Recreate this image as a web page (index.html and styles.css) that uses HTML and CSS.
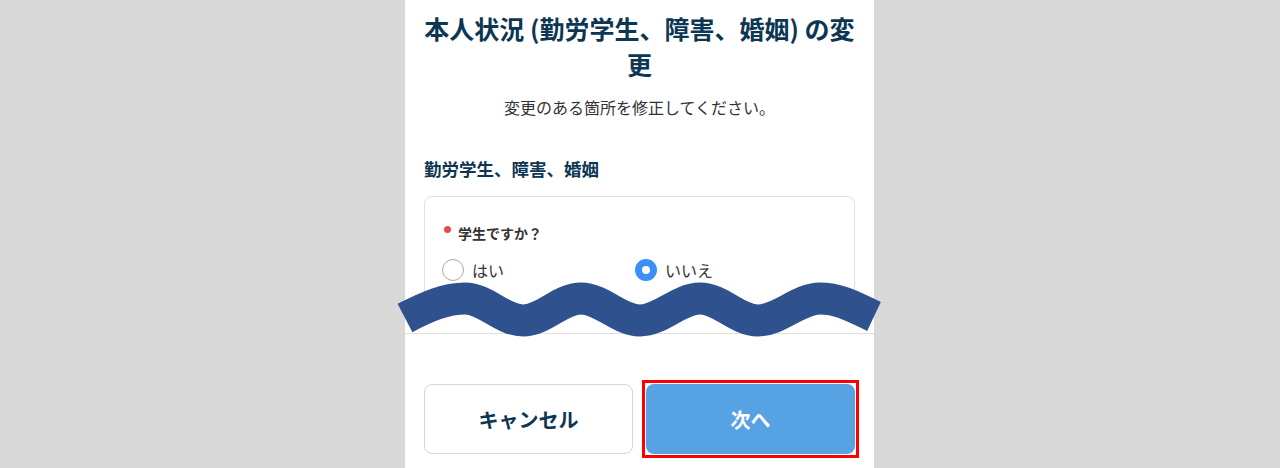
FILE: index.html
```html
<!DOCTYPE html>
<html lang="ja">
<head>
  <meta charset="UTF-8" />
  <meta name="viewport" content="width=device-width, initial-scale=1.0"/>
  <title>本人状況の変更</title>
  <link rel="stylesheet" href="styles.css">
</head>
<body>
  <main class="panel">
    <h1 class="title">本人状況 (勤労学生、障害、婚姻) の変更</h1>
    <p class="lead">変更のある箇所を修正してください。</p>

    <h2 class="section-title">勤労学生、障害、婚姻</h2>
    <div class="card">
      <p class="q-label"><span class="req"></span>学生ですか？</p>
      <div class="options">
        <label class="option"><span class="radio"></span>はい</label>
        <label class="option"><span class="radio checked"></span>いいえ</label>
      </div>
    </div>

    <hr class="divider">

    <div class="actions">
      <button class="btn btn-cancel">キャンセル</button>
      <button class="btn btn-next">次へ</button>
    </div>

    <!-- 省略を示す波線 -->
    <svg class="cut-wave" width="490" height="80" viewBox="395 270 490 80">
      <path d="M405 318 C428 306 446 298.5 465 298.5 C486 298.5 502 320.5 523 320.5 C544 320.5 560 298.5 581 298.5 C602 298.5 619 320.5 640 320.5 C661 320.5 679 298.5 700 298.5 C721 298.5 737 320.5 758 320.5 C779 320.5 799 298.5 820 298.5 C840 298.5 856 308 874 316.5"
            fill="none" stroke="#2f528e" stroke-width="32" stroke-linecap="butt"/>
    </svg>
  </main>
</body>
</html>
```

FILE: styles.css
```css
:root {
  --navy: #0c3652;
  --text: #333333;
  --border: #e0e0e0;
  --blue: #3b8ff5;
  --btn-blue: #56a2e3;
  --page-bg: #d9d9d9;
}
body {
  margin: 0;
  background-color: var(--page-bg);
  font-family: "Noto Sans CJK JP", "Noto Sans", sans-serif;
  color: var(--text);
  overflow: hidden;
}
.panel {
  position: relative;
  box-sizing: border-box;
  width: 469px;
  min-height: 468px;
  margin-left: calc(50% - 235px);
  padding: 10px 19px 0;
  background-color: #ffffff;
}
.title {
  margin: 0;
  font-size: 25px;
  line-height: 36px;
  font-weight: bold;
  text-align: center;
  color: var(--navy);
}
.lead {
  margin: 13px 0 0;
  font-size: 16px;
  line-height: 24px;
  text-align: center;
}
.section-title {
  margin: 36px 0 0;
  font-size: 17.5px;
  line-height: 27px;
  font-weight: bold;
  color: var(--navy);
}
.card {
  margin-top: 14px;
  height: 115px;
  box-sizing: border-box;
  padding: 26px 16px 0 17px;
  border: 1px solid var(--border);
  border-radius: 8px;
}
.q-label {
  display: flex;
  margin: 0;
  font-size: 14px;
  line-height: 21px;
  font-weight: bold;
}
.req {
  width: 7px;
  height: 7px;
  margin: 3px 7px 0 2px;
  border-radius: 50%;
  background-color: #e84a4a;
}
.options {
  display: grid;
  grid-template-columns: 193px 1fr;
  margin-top: 15px;
}
.option {
  display: flex;
  align-items: center;
  gap: 8px;
  font-size: 16px;
  line-height: 22px;
}
.radio {
  box-sizing: border-box;
  width: 22px;
  height: 22px;
  border: 1.5px solid #aaaaaa;
  border-radius: 50%;
  background-color: #ffffff;
}
.radio.checked {
  border: 7px solid var(--blue);
}
.divider {
  margin: 22px -19px 0;
  border: none;
  border-top: 1px solid var(--border);
}
.actions {
  display: grid;
  grid-template-columns: 1fr 1fr;
  gap: 13px;
  margin-top: 50px;
}
.btn {
  height: 70px;
  border-radius: 8px;
  font-family: inherit;
  font-size: 20px;
  font-weight: bold;
  cursor: pointer;
}
.btn-cancel {
  background-color: #ffffff;
  border: 1px solid #d6d6d6;
  color: var(--navy);
}
.btn-next {
  position: relative;
  background-color: var(--btn-blue);
  border: none;
  color: #ffffff;
}
/* 注目枠 */
.btn-next::after {
  content: "";
  position: absolute;
  inset: -4px;
  border: 3px solid #ff0000;
}
.cut-wave {
  position: absolute;
  left: -10px;
  top: 270px;
}
```
